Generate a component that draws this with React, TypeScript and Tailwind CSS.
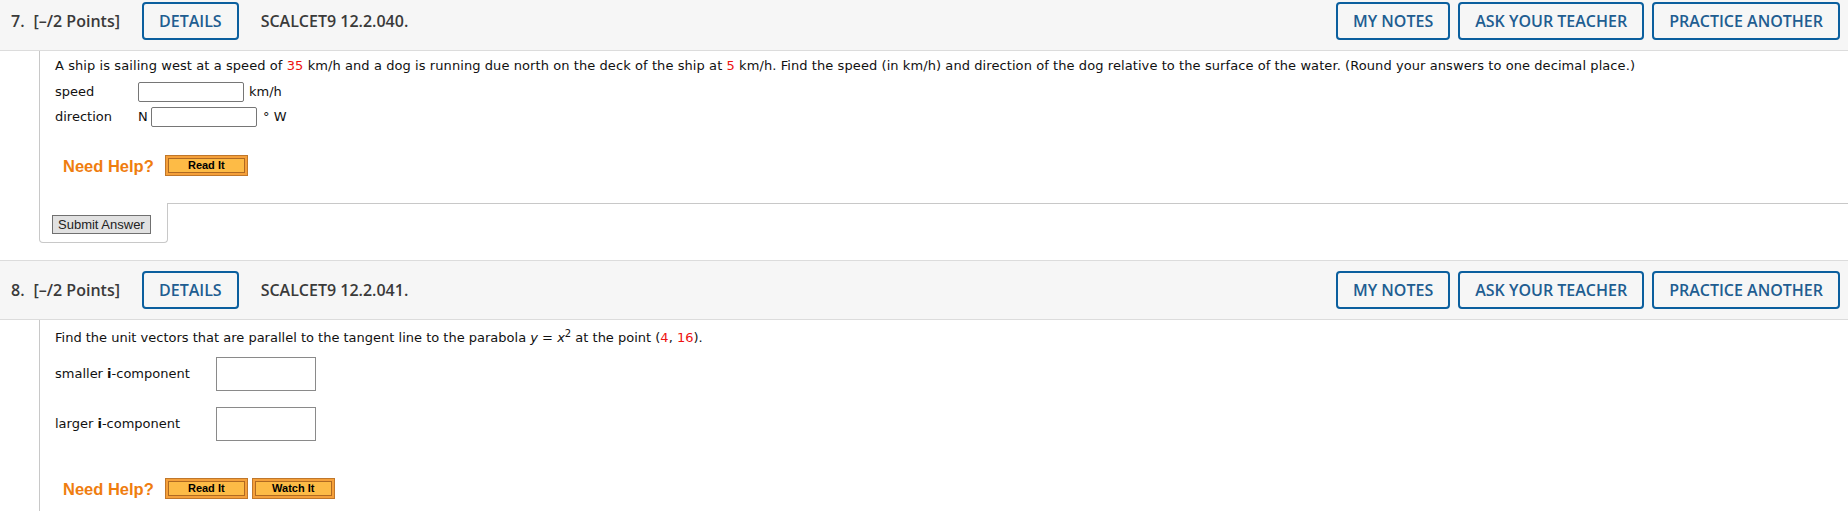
import type { ReactNode } from "react";

const RIGHT_BUTTONS = ["MY NOTES", "ASK YOUR TEACHER", "PRACTICE ANOTHER"];

function HeaderButton({ children }: { children: ReactNode }) {
  return (
    <button
      type="button"
      className="h-[38px] rounded-[4px] border-2 border-[#0b5f9e] px-[15px] text-[16px] font-semibold text-[#215d91]"
    >
      {children}
    </button>
  );
}

function QuestionHeader({ num, code, first }: { num: number; code: string; first?: boolean }) {
  return (
    <div
      className={`flex items-center border-y border-[#dcdcdc] bg-[#f6f6f6] pt-[10px] pb-[10px] pl-[11px] pr-[8px] ${
        first ? "-mt-[9px]" : ""
      }`}
      style={{ fontFamily: '"Open Sans", "Liberation Sans", sans-serif' }}
    >
      <span className="text-[16px] font-semibold text-[#3a3a3a]">
        <span className="mr-[9px]">{num}.</span>[–/2 Points]
      </span>
      <div className="ml-[22px]">
        <HeaderButton>DETAILS</HeaderButton>
      </div>
      <span className="ml-[22px] text-[16px] font-semibold text-[#3a3a3a]">{code}</span>
      <div className="ml-auto flex gap-[8px]">
        {RIGHT_BUTTONS.map((b) => (
          <HeaderButton key={b}>{b}</HeaderButton>
        ))}
      </div>
    </div>
  );
}

function OrangeButton({ label }: { label: string }) {
  return (
    <button
      type="button"
      className="h-[21px] w-[83px] border border-[#c0772a] bg-[#f5a03a] p-[2px]"
    >
      <span
        className="flex h-full w-full items-center justify-center border border-[#b06a22] bg-[#fdbb46] text-[11px] font-bold leading-none text-black"
        style={{ fontFamily: '"Liberation Sans", Arial, sans-serif' }}
      >
        {label}
      </span>
    </button>
  );
}

function NeedHelp({ watch }: { watch?: boolean }) {
  return (
    <div className="flex items-center">
      <span
        className="ml-[8px] mr-[11px] text-[16.5px] font-bold text-[#ef7d0f]"
        style={{ fontFamily: '"Liberation Sans", Arial, sans-serif' }}
      >
        Need Help?
      </span>
      <div className="flex gap-[4px]">
        <OrangeButton label="Read It" />
        {watch ? <OrangeButton label="Watch It" /> : null}
      </div>
    </div>
  );
}

const Red = ({ children }: { children: ReactNode }) => (
  <span className="text-[#ee1111]">{children}</span>
);

export default function App() {
  return (
    <div
      className="h-[511px] overflow-hidden bg-white text-[13px] leading-[16px] text-[#111]"
      style={{ fontFamily: '"DejaVu Sans", Verdana, sans-serif' }}
    >
      <QuestionHeader num={7} code="SCALCET9 12.2.040." first />

      <div className="ml-[39px]">
        <div className="border-l border-[#c8c8c8] pl-[15px] pt-[7px] pb-[27px]">
          <p className="tracking-[0.08px]">
            A ship is sailing west at a speed of <Red>35</Red> km/h and a dog is running due north
            on the deck of the ship at <Red>5</Red> km/h. Find the speed (in km/h) and direction of
            the dog relative to the surface of the water. (Round your answers to one decimal place.)
          </p>
          <div className="mt-[8px] flex items-center">
            <span className="w-[83px]">speed</span>
            <input
              type="text"
              className="h-[20px] w-[106px] rounded-[2px] border border-[#767676] bg-white"
            />
            <span className="ml-[5px]">km/h</span>
          </div>
          <div className="mt-[5px] flex items-center">
            <span className="w-[83px]">direction</span>
            <span className="w-[13px]">N</span>
            <input
              type="text"
              className="h-[20px] w-[106px] rounded-[2px] border border-[#767676] bg-white"
            />
            <span className="ml-[6px]">° W</span>
          </div>
          <div className="mt-[28px]">
            <NeedHelp />
          </div>
        </div>
        <div className="flex">
          <div className="h-[40px] w-[129px] rounded-b-[4px] border-x border-b border-[#c8c8c8] pl-[12px] pt-[12px]">
            <button
              type="button"
              className="h-[19px] border border-[#707070] bg-[#e1e1e1] px-[5px] text-[13px] leading-none text-[#222]"
              style={{ fontFamily: '"Liberation Sans", Arial, sans-serif' }}
            >
              Submit Answer
            </button>
          </div>
          <div className="flex-1 border-t border-[#c8c8c8]" />
        </div>
      </div>

      <div className="mt-[17px]">
        <QuestionHeader num={8} code="SCALCET9 12.2.041." />
      </div>

      <div className="ml-[39px] border-l border-[#c8c8c8] pl-[15px] pt-[10px] pb-[40px]">
        <p>
          Find the unit vectors that are parallel to the tangent line to the parabola <i>y</i> ={" "}
          <i>x</i>
          <sup className="text-[10px]">2</sup> at the point (<Red>4</Red>, <Red>16</Red>).
        </p>
        <div className="mt-[11px] flex items-center">
          <span className="w-[161px]">
            smaller <b>i</b>-component
          </span>
          <input type="text" className="h-[34px] w-[100px] border border-[#8a8a8a] bg-white" />
        </div>
        <div className="mt-[16px] flex items-center">
          <span className="w-[161px]">
            larger <b>i</b>-component
          </span>
          <input type="text" className="h-[34px] w-[100px] border border-[#8a8a8a] bg-white" />
        </div>
        <div className="mt-[37px]">
          <NeedHelp watch />
        </div>
      </div>
    </div>
  );
}
